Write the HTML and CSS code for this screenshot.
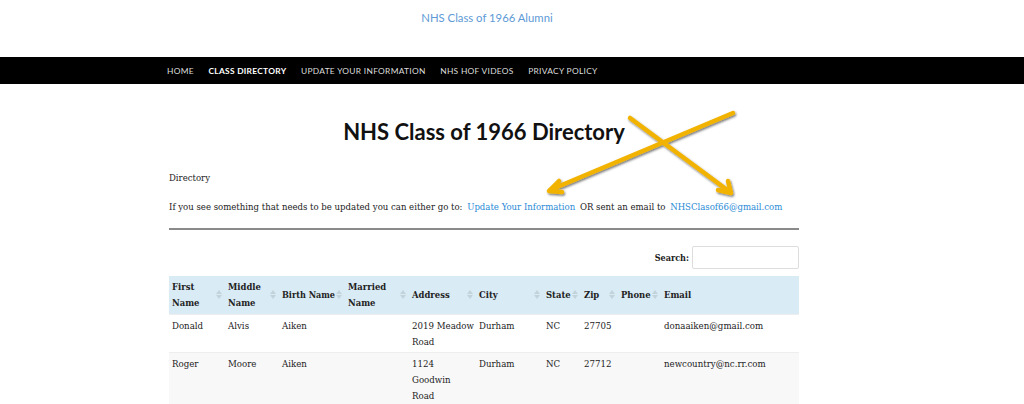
FILE: index.html
```html
<!DOCTYPE html>
<html>
<head>
<meta charset="utf-8">
<link rel="stylesheet" href="styles.css">
</head>
<body>
<header class="site-header">
  <div class="wrap">
    <p class="site-title">NHS Class of 1966 Alumni</p>
  </div>
</header>
<nav class="main-nav">
  <ul class="wrap nav-list">
    <li>Home</li>
    <li class="active">Class Directory</li>
    <li>Update Your Information</li>
    <li>NHS HOF Videos</li>
    <li>Privacy Policy</li>
  </ul>
</nav>
<main class="wrap content">
  <h1 class="page-title">NHS Class of 1966 Directory</h1>
  <p class="intro">Directory</p>
  <p class="intro">If you see something that needs to be updated you can either go to: <a>Update Your Information</a> OR sent an email to <a>NHSClasof66@gmail.com</a></p>
  <hr class="rule">
  <div class="search-row">
    <label>Search:</label>
    <span class="search-box"></span>
  </div>
  <table class="dir">
    <colgroup>
      <col style="width:56px"><col style="width:54px"><col style="width:66px"><col style="width:64px"><col style="width:67px"><col style="width:67px"><col style="width:38px"><col style="width:37px"><col style="width:43px"><col style="width:138px">
    </colgroup>
    <thead>
      <tr>
        <th class="sort">First Name</th>
        <th class="sort">Middle Name</th>
        <th class="sort nowrap">Birth Name</th>
        <th class="sort">Married Name</th>
        <th class="sort">Address</th>
        <th class="sort">City</th>
        <th class="sort">State</th>
        <th class="sort">Zip</th>
        <th class="sort">Phone</th>
        <th>Email</th>
      </tr>
    </thead>
    <tbody>
      <tr>
        <td>Donald</td><td>Alvis</td><td>Aiken</td><td></td><td>2019 Meadow Road</td><td>Durham</td><td>NC</td><td>27705</td><td></td><td>donaaiken@gmail.com</td>
      </tr>
      <tr class="odd">
        <td>Roger</td><td>Moore</td><td>Aiken</td><td></td><td>1124<br>Goodwin<br>Road</td><td>Durham</td><td>NC</td><td>27712</td><td></td><td>newcountry@nc.rr.com</td>
      </tr>
    </tbody>
  </table>
  <svg class="arrows" width="1024" height="404" viewBox="0 0 1024 404">
    <defs>
      <filter id="sh" x="-20%" y="-20%" width="140%" height="140%">
        <feDropShadow dx="1" dy="1.5" stdDeviation="1.2" flood-color="#000" flood-opacity="0.55"/>
      </filter>
    </defs>
    <g filter="url(#sh)" stroke="#f2b300" stroke-width="4.5" stroke-linecap="round" fill="none" stroke-linejoin="round">
      <line x1="733" y1="113" x2="550" y2="190"/>
      <polyline points="559,181 549,191 562,192"/>
      <line x1="630" y1="118" x2="730" y2="192"/>
      <polyline points="718,190 731,193 728,181"/>
    </g>
  </svg>
</main>
</body>
</html>
```

FILE: styles.css
```css
* { box-sizing: border-box; }
html, body { margin: 0; padding: 0; background: #fff; }
body {
  font-family: "DejaVu Serif Condensed", "DejaVu Serif", serif;
  font-stretch: condensed;
  font-size: 9.5px;
  color: #222;
  position: relative;
  height: 404px;
  overflow: hidden;
}
.wrap {
  width: 640px;
  margin-left: 167px;
}
.site-header { height: 57px; }
.site-title {
  margin: 0;
  padding-top: 11px;
  text-align: center;
  font-family: Lato, sans-serif;
  font-size: 11.3px;
  color: #5d9ad6;
}
.main-nav {
  background: #000;
  height: 27px;
}
.nav-list {
  list-style: none;
  margin-top: 0;
  margin-bottom: 0;
  padding: 0;
  display: flex;
  gap: 14.5px;
  height: 27px;
  align-items: center;
}
.nav-list li {
  font-family: Lato, sans-serif;
  font-size: 8.4px;
  text-transform: uppercase;
  letter-spacing: 0.3px;
  color: #ddd;
}
.nav-list li.active { color: #fff; font-weight: bold; }
.content {
  width: 630px;
  margin-left: 169px;
}
.page-title {
  margin: 34px 0 0;
  font-family: Lato, sans-serif;
  font-size: 22px;
  font-weight: bold;
  text-align: center;
  color: #111;
  line-height: 28px;
}
.intro {
  margin: 0;
  line-height: 14px;
}
.intro:first-of-type { margin-top: 25px; }
.intro + .intro { margin-top: 15px; }
.intro a { color: #2a8ad6; margin: 0 2px; }
.rule {
  margin: 14px 0 0;
  border: 0;
  height: 2px;
  background: #8a8a8a;
}
.search-row {
  display: flex;
  justify-content: flex-end;
  align-items: center;
  gap: 3px;
  margin-top: 16px;
  height: 23px;
}
.search-row label { font-weight: bold; font-size: 9px; }
.search-box {
  width: 107px;
  height: 23px;
  border: 1px solid #ddd;
  border-radius: 2px;
}
.dir {
  width: 630px;
  margin-top: 7px;
  border-collapse: collapse;
  table-layout: fixed;
}
.dir th {
  background: #d9ebf5;
  text-align: left;
  font-weight: bold;
  font-size: 9.4px;
  line-height: 16px;
  padding: 3px 8px 3px 3px;
  height: 37px;
  vertical-align: middle;
  position: relative;
}
.dir th.nowrap { white-space: nowrap; font-size: 9px; }
.dir th.sort::before,
.dir th.sort::after {
  content: "";
  position: absolute;
  right: 3px;
  width: 0;
  height: 0;
  border-left: 3px solid transparent;
  border-right: 3px solid transparent;
}
.dir th.sort::before {
  top: 14px;
  border-bottom: 4px solid #c3d3dc;
}
.dir th.sort::after {
  top: 19px;
  border-top: 4px solid #c3d3dc;
}
.dir td {
  padding: 3px 0 2px 3px;
  line-height: 16px;
  vertical-align: top;
  font-size: 9.6px;
  border-top: 1px solid #eee;
}
.dir tr.odd td { background: #f8f8f8; }
.arrows {
  position: absolute;
  left: 0;
  top: 0;
  pointer-events: none;
}
```
